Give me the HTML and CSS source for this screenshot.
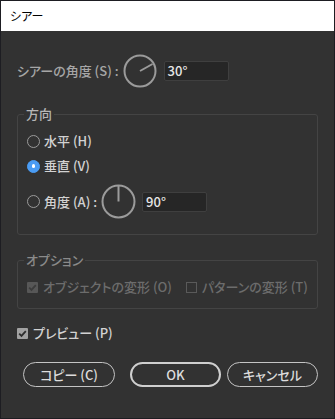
FILE: index.html
```html
<!DOCTYPE html>
<html lang="ja">
<head>
<meta charset="utf-8">
<link rel="stylesheet" href="styles.css">
</head>
<body>
<div class="dialog">
  <div class="titlebar">シアー</div>
  <div class="content">
    <div class="row shear-row">
      <span class="label dim">シアーの角度 (S) :</span>
      <svg class="dial" width="34" height="34" viewBox="0 0 34 34">
        <circle cx="17" cy="17" r="15.5" fill="none" stroke="#9b9b9b" stroke-width="2"/>
        <line x1="17" y1="17" x2="29.5" y2="10" stroke="#9b9b9b" stroke-width="2"/>
      </svg>
      <div class="field">30°</div>
    </div>

    <fieldset class="group dir">
      <legend>方向</legend>
      <div class="row radio-row">
        <span class="radio"></span><span class="label">水平 (H)</span>
      </div>
      <div class="row radio-row">
        <span class="radio on"></span><span class="label">垂直 (V)</span>
      </div>
      <div class="row angle-row">
        <span class="radio"></span><span class="label">角度 (A) :</span>
        <svg class="dial" width="35" height="35" viewBox="0 0 35 35">
          <circle cx="17.5" cy="17.5" r="16" fill="none" stroke="#9b9b9b" stroke-width="2"/>
          <line x1="17.5" y1="17.5" x2="17.5" y2="2" stroke="#9b9b9b" stroke-width="2"/>
        </svg>
        <div class="field">90°</div>
      </div>
    </fieldset>

    <fieldset class="group opt">
      <legend class="off">オプション</legend>
      <div class="row check-row">
        <span class="check checked disabled"><svg width="11" height="11" viewBox="0 0 11 11"><path d="M2.2 5.6 L4.5 7.9 L8.8 3.2" fill="none" stroke="#3c3c3c" stroke-width="1.8"/></svg></span>
        <span class="label off">オブジェクトの変形 (O)</span>
        <span class="check empty"></span>
        <span class="label off">パターンの変形 (T)</span>
      </div>
    </fieldset>

    <div class="row preview-row">
      <span class="check checked"><svg width="11" height="11" viewBox="0 0 11 11"><path d="M2.2 5.6 L4.5 7.9 L8.8 3.2" fill="none" stroke="#2e2e2e" stroke-width="1.8"/></svg></span>
      <span class="label">プレビュー (P)</span>
    </div>

    <div class="buttons">
      <button class="btn copy">コピー (C)</button>
      <button class="btn ok">OK</button>
      <button class="btn cancel">キャンセル</button>
    </div>
  </div>
</div>
</body>
</html>
```
FILE: styles.css
```css
html, body {
  margin: 0;
  padding: 0;
  background: #323232;
}
body {
  font-family: "Noto Sans CJK JP", "Noto Sans", sans-serif;
  font-size: 13px;
  font-weight: 500;
  font-feature-settings: "palt";
  color: #d2d2d2;
}
.dialog {
  width: 335px;
  height: 419px;
  box-sizing: border-box;
  border: 1px solid #1d1d22;
  background: #323232;
}
.titlebar {
  height: 30px;
  background: #ffffff;
  color: #000;
  font-size: 12px;
  font-weight: 400;
  line-height: 30px;
  padding-left: 9px;
}
.content {
  padding: 0 16px;
}
.row {
  display: flex;
  align-items: center;
}
.label {
  white-space: nowrap;
  line-height: 20px;
}
.dim { color: #a6a6a6; }
.shear-row {
  margin-top: 23px;
  height: 34px;
}
.shear-row .dial { margin-left: 4px; }
.field {
  box-sizing: border-box;
  width: 65px;
  height: 20px;
  background: #262626;
  border: 1px solid #3f3f3f;
  border-radius: 2px;
  color: #e6e6e6;
  line-height: 18px;
  padding-left: 3px;
  font-size: 13px;
}
.shear-row .field { margin-left: 7px; }

.group {
  margin: 0;
  border: 1px solid #444444;
  border-radius: 3px;
  padding: 0 9px 0 9px;
}
.group legend {
  padding: 0 2px;
  margin-left: -3px;
  line-height: 16px;
  color: #b6b6b6;
}
.dir { margin-top: 18px; padding-bottom: 15px; }
.radio-row { height: 20px; margin-top: 5px; }
.radio-row:first-of-type { margin-top: 9px; }
.radio {
  box-sizing: border-box;
  width: 13px;
  height: 13px;
  border-radius: 50%;
  border: 1.6px solid #9a9a9a;
  margin-right: 4px;
  flex: none;
}
.radio.on {
  background: #4a9cf4;
  border-color: #4a9cf4;
  position: relative;
}
.radio.on::after {
  content: "";
  position: absolute;
  left: 3.5px;
  top: 3.5px;
  width: 3.5px;
  height: 3.5px;
  border-radius: 50%;
  background: #ffffff;
}
.angle-row { height: 35px; margin-top: 8px; }
.angle-row .dial { margin-left: 4px; }
.angle-row .field { margin-left: 6px; }

.opt { margin-top: 17px; padding-bottom: 11px; }
.opt legend.off { color: #8a8a8a; }
.check-row { height: 20px; margin-top: 9px; }
.check {
  box-sizing: border-box;
  width: 11px;
  height: 11px;
  flex: none;
  margin-right: 5px;
  display: flex;
}
.check.checked { background: #a2a2a2; border-radius: 1px; }
.check.checked.disabled { background: #575757; }
.check.empty {
  border: 1px solid #5a5a5a;
  margin-left: 14px;
}
.label.off { color: #6c6c6c; }

.preview-row { height: 20px; margin-top: 14px; }

.buttons {
  display: flex;
  margin-top: 19px;
  padding-left: 6px;
}
.btn {
  box-sizing: border-box;
  height: 25px;
  width: 91px;
  border-radius: 13px;
  background: transparent;
  border: 1.5px solid #c4c4c4;
  color: #dcdcdc;
  font-family: inherit;
  font-size: 13px;
  font-weight: 500;
  font-feature-settings: "palt";
  padding: 0;
}
.btn.copy { width: 92px; }
.btn.ok { margin-left: 15px; border: 2px solid #cfcfcf; }
.btn.cancel { margin-left: 6px; }
```
